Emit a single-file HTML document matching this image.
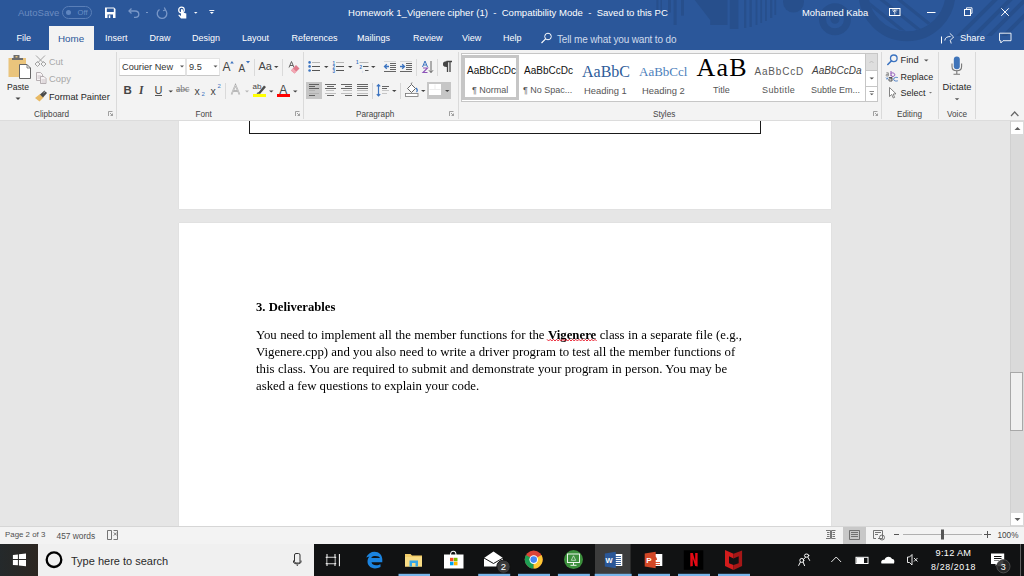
<!DOCTYPE html>
<html><head><meta charset="utf-8">
<style>
*{margin:0;padding:0;box-sizing:border-box}
html,body{width:1024px;height:576px;overflow:hidden;background:#e6e6e6;font-family:"Liberation Sans",sans-serif}
.a{position:absolute;white-space:pre;line-height:1}
#title{position:absolute;left:0;top:0;width:1024px;height:50px;background:#2b579a;overflow:hidden}
#ribbon{position:absolute;left:0;top:50px;width:1024px;height:71px;background:#f3f3f3;border-bottom:1px solid #dcdcdc}
#doc{position:absolute;left:0;top:121px;width:1024px;height:405px;background:#e6e6e6;overflow:hidden}
#status{position:absolute;left:0;top:526px;width:1024px;height:18px;background:#f3f3f3;border-top:1px solid #d6d6d6}
#taskbar{position:absolute;left:0;top:544px;width:1024px;height:32px;background:#111213}
.tab{position:absolute;top:33px;font-size:9px;color:#fff}
.gl{position:absolute;top:108px;font-size:9px;color:#444}
.sep{position:absolute;width:1px;background:#dadada}
.t{position:absolute;white-space:pre;line-height:1;color:#262626}
.gl2{font-size:8.2px;color:#444;top:110.6px!important}
</style></head><body>

<div id="title">
  <svg width="1024" height="50" style="position:absolute;left:0;top:0">
    <defs>
      <clipPath id="cpb"><circle cx="715" cy="-57" r="87"/></clipPath>
      <clipPath id="cpi"><circle cx="907" cy="-7.3" r="38.4"/></clipPath>
      <clipPath id="cpr"><rect x="950" y="0" width="74" height="36"/></clipPath>
    </defs>
    <g fill="#274f8c">
      <rect x="656.4" y="0" width="2" height="15"/>
      <rect x="660.5" y="0" width="1.5" height="12"/>
      <rect x="668" y="0" width="3" height="12.5"/>
      <rect x="673.6" y="0" width="3" height="25"/>
      <rect x="681" y="0" width="3" height="15.6"/>
      <rect x="729.8" y="0" width="8.6" height="29"/>
      <rect x="744" y="0" width="2.3" height="28"/>
      <rect x="749.5" y="0" width="2.3" height="27"/>
      <rect x="755.6" y="0" width="1.8" height="25"/>
      <rect x="760.3" y="0" width="1.8" height="23"/>
      <rect x="765" y="0" width="1.8" height="21"/>
      <rect x="770" y="0" width="2.3" height="18"/>
      <rect x="774.4" y="0" width="1.8" height="15"/>
      <path d="M694.7 0 H727.5 V25 H710.3 V20.3 Z"/>
    </g>
    <circle cx="793.5" cy="2" r="10.5" fill="#274f8c"/>
    <circle cx="835" cy="19.3" r="12.5" fill="none" stroke="#274f8c" stroke-width="7"/>
    <circle cx="835" cy="19.3" r="4.5" fill="#274f8c"/>
    <circle cx="907" cy="-7.3" r="43.5" fill="none" stroke="#274f8c" stroke-width="10"/>
    <g stroke="#274f8c" stroke-width="3.2" clip-path="url(#cpi)">
      <path d="M862 -2 L912 38 M872 -8 L922 32 M882 -14 L932 26 M855 14 L895 46"/>
    </g>
    <g stroke="#274f8c" stroke-width="4" clip-path="url(#cpr)">
      <path d="M955 40 L1000 -5 M970 40 L1015 -5 M985 40 L1030 -5 M1000 40 L1045 -5"/>
    </g>
  </svg>
  <div class="a" style="left:18px;top:8px;font-size:9.5px;color:#6b8cc0">AutoSave</div>
  <div class="a" style="left:62px;top:6px;width:30px;height:13px;border:1px solid #5a7fb8;border-radius:7px"></div>
  <div class="a" style="left:65.5px;top:9.5px;width:5.5px;height:5.5px;background:#5f86c0;border-radius:50%"></div>
  <div class="a" style="left:77.5px;top:8.5px;font-size:7.6px;color:#6a8fc6">Off</div>
  <div class="a" style="left:348px;top:8px;font-size:9.55px;color:#fff">Homework 1_Vigenere cipher (1)  -  Compatibility Mode  -  Saved to this PC</div>
  <div class="a" style="left:802px;top:8px;font-size:9.4px;color:#fff">Mohamed Kaba</div>
  <div id="home" style="position:absolute;left:49px;top:26px;width:45px;height:24px;background:#f3f3f3"></div>
  <div class="tab" style="left:16.5px">File</div>
  <div class="tab" style="left:58px;font-size:9.8px;top:32.5px;color:#2b579a">Home</div>
  <div class="tab" style="left:105px">Insert</div>
  <div class="tab" style="left:149.5px">Draw</div>
  <div class="tab" style="left:192px">Design</div>
  <div class="tab" style="left:242px">Layout</div>
  <div class="tab" style="left:291.5px">References</div>
  <div class="tab" style="left:357px">Mailings</div>
  <div class="tab" style="left:413px">Review</div>
  <div class="tab" style="left:462px">View</div>
  <div class="tab" style="left:503px">Help</div>
  <div class="tab" style="left:557px;top:34px;font-size:10px;letter-spacing:-0.15px;color:#d0dbec">Tell me what you want to do</div>
  <div class="tab" style="left:960px;top:33px;font-size:9.3px">Share</div>
  <svg width="1024" height="50" style="position:absolute;left:0;top:0">
    <!-- save -->
    <path d="M105 7.5 H114 L115.5 9 V18 H105 Z" fill="#fff"/>
    <rect x="106.8" y="8.5" width="7" height="3.5" fill="#2b579a"/>
    <rect x="107.5" y="14.5" width="5.5" height="3.5" fill="#2b579a"/>
    <rect x="108.8" y="15.3" width="1.5" height="2.7" fill="#fff"/>
    <!-- undo -->
    <path d="M129 11 H135 C137.5 11 138.8 12.5 138.8 14.2 C138.8 16 137.5 17.3 135.5 17.3 H134" stroke="#7a98c8" stroke-width="1.3" fill="none"/>
    <path d="M131.5 8.5 L129 11 L131.5 13.5" stroke="#7a98c8" stroke-width="1.3" fill="none"/>
    <rect x="146" y="12" width="2" height="1" fill="#7a98c8"/>
    <!-- redo -->
    <path d="M165 9.8 A4.8 4.8 0 1 1 159.5 9.5" stroke="#7a98c8" stroke-width="1.3" fill="none"/>
    <path d="M164.3 7.5 L165.5 10 L163 10.8" stroke="#7a98c8" stroke-width="1.2" fill="none"/>
    <!-- touch -->
    <circle cx="181.5" cy="10" r="2.8" fill="none" stroke="#fff" stroke-width="1.2"/>
    <path d="M181 9 V16 L179 14.5 L178.3 15.3 L181 18.5 H186.3 V13.5 L183 12.5 V9.5 Z" fill="#fff"/>
    <path d="M194 12 H197.5 L195.75 13.8 Z" fill="#fff"/>
    <path d="M209.3 10.5 H214.3" stroke="#fff" stroke-width="0.9"/><path d="M209.8 12 H213.8 L211.8 14 Z" fill="#fff"/>
    <!-- search icon -->
    <circle cx="548" cy="36.5" r="3.3" fill="none" stroke="#fff" stroke-width="1"/>
    <path d="M545.6 38.9 L541.5 43" stroke="#fff" stroke-width="1.1"/>
    <!-- window controls -->
    <rect x="889.5" y="8.5" width="10.5" height="7" fill="none" stroke="#fff" stroke-width="1"/>
    <path d="M894.75 14.5 V10.5 M893 12 L894.75 10.3 L896.5 12 M892 10 H897.5" stroke="#fff" stroke-width="0.8" fill="none"/>
    <rect x="927" y="12" width="8.5" height="1" fill="#fff"/>
    <rect x="964.5" y="9.5" width="6" height="6" fill="none" stroke="#fff" stroke-width="1"/>
    <path d="M966.5 9.5 V7.8 H972 V13.3 H970.5" fill="none" stroke="#fff" stroke-width="0.9"/>
    <path d="M1001.3 8.3 L1008.8 15.8 M1008.8 8.3 L1001.3 15.8" stroke="#fff" stroke-width="1"/>
    <!-- share -->
    <rect x="941" y="36.5" width="1" height="7" fill="#fff"/>
    <path d="M944.8 40.5 C945 37.8 947 36.5 950.5 36.5 M949.8 33.3 L953.6 37 L950.3 40.3 M950.3 40.3 L951.2 43.5" stroke="#fff" stroke-width="0.9" fill="none"/>
    <path d="M999.5 33.2 H1011 V40.7 H1003 L1000.8 43 V40.7 H999.5 Z" fill="none" stroke="#fff" stroke-width="0.9"/>
  </svg>
</div>

<div id="ribbon"></div>
<div id="rb" style="position:absolute;left:0;top:0;width:1024px;height:121px">
  <!-- separators -->
  <div class="sep" style="left:116px;top:52px;height:67px"></div>
  <div class="sep" style="left:303px;top:52px;height:67px"></div>
  <div class="sep" style="left:458px;top:52px;height:67px"></div>
  <div class="sep" style="left:881px;top:52px;height:67px"></div>
  <div class="sep" style="left:938px;top:52px;height:67px"></div>
  <div class="sep" style="left:975px;top:52px;height:67px"></div>
  <!-- group labels -->
  <div class="t gl2" style="left:34px;top:109px">Clipboard</div>
  <div class="t gl2" style="left:195.5px;top:109px">Font</div>
  <div class="t gl2" style="left:356px;top:109px">Paragraph</div>
  <div class="t gl2" style="left:653px;top:109px">Styles</div>
  <div class="t gl2" style="left:897px;top:109px">Editing</div>
  <div class="t gl2" style="left:947px;top:109px">Voice</div>
  <!-- clipboard -->
  <div class="t" style="left:7px;top:83px;font-size:8.6px">Paste</div>
  <div class="t" style="left:49px;top:58px;font-size:9px;color:#a8a8a8">Cut</div>
  <div class="t" style="left:49px;top:74px;font-size:9.4px;color:#a8a8a8">Copy</div>
  <div class="t" style="left:49px;top:93px;font-size:9.2px">Format Painter</div>
  <!-- font -->
  <div style="position:absolute;left:119px;top:58px;width:67px;height:18px;background:#fff;border:1px solid #e3e3e3;border-bottom-color:#c8c8c8"></div>
  <div style="position:absolute;left:186px;top:58px;width:34px;height:18px;background:#fff;border:1px solid #e3e3e3;border-bottom-color:#c8c8c8"></div>
  <div class="t" style="left:122px;top:63px;font-size:9.2px;color:#333">Courier New</div>
  <div class="t" style="left:189px;top:63px;font-size:9.2px;color:#333">9.5</div>
  <!-- editing -->
  <div class="t" style="left:900.5px;top:56px;font-size:9.3px">Find</div>
  <div class="t" style="left:900.5px;top:72.5px;font-size:8.9px">Replace</div>
  <div class="t" style="left:900.5px;top:88.5px;font-size:9px">Select</div>
  <div class="t" style="left:942.5px;top:82.5px;font-size:9.3px">Dictate</div>
  <!-- font row2 text icons -->
  <div class="t" style="left:123.5px;top:85px;font-size:11.5px;font-weight:bold;color:#444">B</div>
  <div class="t" style="left:139px;top:85px;font-size:11.5px;font-weight:bold;font-style:italic;font-family:'Liberation Serif',serif;color:#444">I</div>
  <div class="t" style="left:154.5px;top:85px;font-size:11px;color:#444">U</div>
  <div class="t" style="left:176px;top:85px;font-size:9.5px;color:#777;font-family:'Liberation Serif',serif">abc</div>
  <div class="t" style="left:194.5px;top:86px;font-size:10.5px;color:#444">x</div>
  <div class="t" style="left:201.5px;top:91px;font-size:6px;color:#3b73c0">2</div>
  <div class="t" style="left:210.5px;top:86px;font-size:10.5px;color:#444">x</div>
  <div class="t" style="left:217.5px;top:83px;font-size:6px;color:#3b73c0">2</div>
  <div class="t" style="left:222.5px;top:61px;font-size:12px;color:#444">A</div>
  <div class="t" style="left:238.5px;top:63.5px;font-size:10px;color:#444">A</div>
  <div class="t" style="left:258.5px;top:61px;font-size:11px;color:#444">Aa</div>
  <div class="t" style="left:279.3px;top:84px;font-size:12px;color:#444">A</div>
  <div class="t" style="left:252.5px;top:83px;font-size:8px;color:#444">ab</div>
  <!-- styles gallery -->
  <div style="position:absolute;left:461px;top:53px;width:417px;height:49px;background:#fff;border:1px solid #c6c6c6"></div>
  <div style="position:absolute;left:462px;top:55px;width:57px;height:45px;border:3px solid #c6c6c6"></div>
  <div style="position:absolute;left:865px;top:53px;width:13px;height:49px;border:1px solid #c6c6c6;background:#fff"></div>
  <div style="position:absolute;left:866px;top:54px;width:11px;height:16px;background:#dedede"></div>
  <div style="position:absolute;left:865px;top:70px;width:13px;height:1px;background:#c6c6c6"></div>
  <div style="position:absolute;left:865px;top:86px;width:13px;height:1px;background:#c6c6c6"></div>
  <div class="t" style="left:467px;top:66px;font-size:10px;color:#111">AaBbCcDc</div>
  <div class="t" style="left:472px;top:86px;font-size:9px;color:#555">¶ Normal</div>
  <div class="t" style="left:524px;top:66px;font-size:10px;color:#111">AaBbCcDc</div>
  <div class="t" style="left:523px;top:86px;font-size:9px;color:#555">¶ No Spac...</div>
  <div class="t" style="left:582px;top:63.5px;font-size:16px;color:#2e5c9a;font-family:'Liberation Serif',serif">AaBbC</div>
  <div class="t" style="left:584px;top:86px;font-size:9.4px;color:#555">Heading 1</div>
  <div class="t" style="left:639px;top:65px;font-size:13px;color:#4a7ebb;font-family:'Liberation Serif',serif">AaBbCcl</div>
  <div class="t" style="left:642px;top:86px;font-size:9.4px;color:#555">Heading 2</div>
  <div class="t" style="left:696.5px;top:55px;font-size:26px;letter-spacing:1.2px;color:#000;font-family:'Liberation Serif',serif">AaB</div>
  <div class="t" style="left:713px;top:86px;font-size:9px;color:#555">Title</div>
  <div class="t" style="left:754.5px;top:67px;font-size:10px;color:#5a5a5a;letter-spacing:0.8px">AaBbCcD</div>
  <div class="t" style="left:762px;top:86px;font-size:9px;color:#555;letter-spacing:0.4px">Subtitle</div>
  <div class="t" style="left:812px;top:66px;font-size:10px;color:#404040;font-style:italic">AaBbCcDa</div>
  <div class="t" style="left:811px;top:86px;font-size:9px;color:#555">Subtle Em...</div>
</div>

<div id="doc">
  <div style="position:absolute;left:179px;top:0;width:652px;height:88px;background:#fff;box-shadow:0 0 1px 0 rgba(0,0,0,0.12)"></div>
  <div style="position:absolute;left:249px;top:-1px;width:512px;height:14px;border:1px solid #1a1a1a;border-top:none"></div>
  <div style="position:absolute;left:179px;top:101.5px;width:652px;height:310px;background:#fff;box-shadow:0 0 1px 0 rgba(0,0,0,0.12)"></div>
  <div class="a" style="left:255.5px;top:180px;font-family:'Liberation Serif',serif;font-size:12.65px;font-weight:bold;color:#000;will-change:transform">3. Deliverables</div>
  <div style="position:absolute;left:256px;top:206px;font-family:'Liberation Serif',serif;font-size:12.8px;line-height:16.85px;color:#000;white-space:pre;will-change:transform"><div style="word-spacing:0.18px">You need to implement all the member functions for the <b>Vigenere</b> class in a separate file (e.g.,</div><div style="word-spacing:0.08px">Vigenere.cpp) and you also need to write a driver program to test all the member functions of</div><div style="word-spacing:0.25px">this class. You are required to submit and demonstrate your program in person. You may be</div><div>asked a few questions to explain your code.</div></div>
  <div style="position:absolute;left:1010px;top:0;width:14px;height:405px;background:#dadada;border-left:1px solid #d0d0d0"></div>
  <div style="position:absolute;left:1011px;top:1px;width:12px;height:12px;background:#fff"></div>
  <div style="position:absolute;left:1011px;top:392px;width:12px;height:12px;background:#fff"></div>
  <div style="position:absolute;left:1010px;top:251px;width:13px;height:59px;background:#f0f0f0;border:1px solid #a8a8a8"></div>
  <svg width="14" height="405" style="position:absolute;left:1010px;top:0"><path d="M4.5 9 L7.5 6 L10.5 9 Z" fill="#606060"/><path d="M4.5 397 L7.5 400 L10.5 397 Z" fill="#606060"/></svg>
</div>

<svg id="icons" width="1024" height="121" viewBox="0 0 1024 121" style="position:absolute;left:0;top:0">
  <!-- Paste -->
  <rect x="8.5" y="58" width="17.5" height="19" fill="#eac47c"/>
  <rect x="12" y="58" width="11" height="2" fill="#6d6d6d"/>
  <rect x="13.5" y="55" width="6" height="3.5" fill="#6d6d6d"/>
  <rect x="15.5" y="56" width="2" height="1.5" fill="#eac47c"/>
  <path d="M19.5 64.5 H27 L30.5 68 V78.5 H19.5 Z" fill="#fff" stroke="#666" stroke-width="1"/>
  <path d="M27 64.5 V68 H30.5" fill="none" stroke="#666" stroke-width="0.8"/>
  <path d="M15.5 97.5 L20.5 97.5 L18 100 Z" fill="#444"/>
  <!-- Cut -->
  <g stroke="#a3a3a3" stroke-width="1" fill="none">
    <path d="M36 55.5 L43.5 63 M45 55.5 L37.5 63"/>
    <path d="M37.5 61.5 L40 64 L37.5 66.5 L35 64 Z"/>
    <path d="M43.5 61.5 L46 64 L43.5 66.5 L41 64 Z"/>
  </g>
  <!-- Copy -->
  <g stroke="#b0a8ac" stroke-width="0.9" fill="#f7f3f5">
    <path d="M36.5 72.5 H40.5 L42.5 74.5 V80.5 H36.5 Z"/>
    <path d="M40.5 76.5 H44 L46 78.5 V83.5 H40.5 Z"/>
  </g>
  <g stroke="#b8b0b4" stroke-width="0.7"><path d="M37.5 76 H41 M37.5 78 H40 M41.5 80 H45 M41.5 82 H45"/></g>
  <!-- Format painter -->
  <path d="M35 98 L40 94 L43.5 97.5 L39.5 101.5 Z" fill="#e8b964"/>
  <path d="M40 94.5 L44.5 90.5 L47 93 L43 97.5 Z" fill="#4a4a4a"/>
  <path d="M43.5 93 L46.5 90.5" stroke="#f3f3f3" stroke-width="0.6"/>
  <!-- font group icons -->
  <path d="M180 65.5 H184 L182 67.5 Z" fill="#555"/>
  <path d="M213.5 65.5 H217.5 L215.5 67.5 Z" fill="#555"/>
  <rect x="155" y="95" width="7" height="0.9" fill="#444"/>
  <path d="M168.5 90.5 H173 L170.75 92.5 Z" fill="#444"/>
  <rect x="176" y="89.5" width="13.5" height="0.8" fill="#777"/>
  <path d="M230.2 63.5 L232 61 L233.8 63.5 Z" fill="#3b73c0"/>
  <path d="M246 61 L250 61 L248 63.5 Z" fill="#3b73c0"/>
  <path d="M274 66 H278.5 L276.25 68 Z" fill="#444"/>
  <rect x="225" y="83" width="1" height="16" fill="#dadada"/>
  <rect x="254" y="59" width="1" height="17" fill="#dadada"/>
  <rect x="282" y="59" width="1" height="17" fill="#dadada"/>
  <!-- clear formatting -->
  <path d="M289 67.5 L291.5 61.5 L294 67.5 M290 65.5 H293" stroke="#555" stroke-width="0.9" fill="none"/>
  <path d="M291 70.5 L296 65 L299.5 68.5 L294.5 73.5 Z" fill="#e07b8c"/>
  <path d="M291 70.5 L293 68.3 L296.5 71.7 L294.5 73.5 Z" fill="#f2a8b4"/>
  <!-- text effects -->
  <path d="M231.5 94.5 L235.5 85 L239.5 94.5 M233 91 H238" stroke="#a6a6a6" stroke-width="1.6" fill="none"/>
  <path d="M231.5 94.5 L235.5 85 L239.5 94.5" stroke="#f3f3f3" stroke-width="0.5" fill="none"/>
  <path d="M245 90.5 H249 L247 92.5 Z" fill="#b5b5b5"/>
  <!-- highlighter -->
  <path d="M258 93 L264 85.5 L266 87 L260 94 Z" fill="#4d4d4d"/>
  <path d="M256.5 94 L258 92 L259.5 93.5 Z" fill="#4d4d4d"/>
  <rect x="253" y="94" width="13" height="3" fill="#ffff00"/>
  <path d="M269 90.5 H273.5 L271.25 92.5 Z" fill="#444"/>
  <rect x="277" y="94" width="13" height="3" fill="#ff0000"/>
  <path d="M293 90.5 H297.5 L295.25 92.5 Z" fill="#444"/>
  <!-- paragraph group -->
  <g fill="#3b73c0">
    <circle cx="309.6" cy="62.4" r="1.3"/><circle cx="309.6" cy="66.4" r="1.3"/><circle cx="309.6" cy="70.5" r="1.3"/>
  </g>
  <g stroke="#555" stroke-width="1">
    <path d="M312 66.5 H320 M312 70.5 H320"/>
    <path d="M336 66.5 H344 M336 70.5 H344"/>
    <path d="M363 66.5 H368.5 M365 70.5 H368.5"/>
  </g>
  <g stroke="#b5b5b5" stroke-width="1"><path d="M312 62.5 H320 M336 62.5 H344 M359.5 62.5 H368.5"/></g>
  <g fill="#3b73c0" font-family="Liberation Sans" font-size="4.5" font-weight="bold">
    <text x="332.5" y="64.5">1</text><text x="332.5" y="68.5">2</text><text x="332.5" y="72.5">3</text>
    <text x="356" y="64">1</text><text x="359.5" y="68.5">2</text>
  </g>
  <text x="362" y="72.5" font-family="Liberation Sans" font-size="4" fill="#a0b8e0">i</text>
  <path d="M324 66 H328.5 L326.25 68 Z" fill="#444"/>
  <path d="M348 66 H352.5 L350.25 68 Z" fill="#444"/>
  <path d="M371 66 H375.5 L373.25 68 Z" fill="#444"/>
  <!-- alignment -->
  <rect x="306" y="82" width="16" height="17" fill="#c6c6c6"/>
  <g stroke="#555" stroke-width="0.9">
    <path d="M309 84.5 H319 M309 86.5 H315 M309 88.5 H319 M309 95.5 H315"/>
    <path d="M325 84.5 H336 M327 86.5 H334 M325 88.5 H336 M327 95.5 H334"/>
    <path d="M341 84.5 H352 M345 86.5 H352 M341 88.5 H352 M345 95.5 H352"/>
    <path d="M357 84.5 H368 M357 86.5 H368 M357 88.5 H368 M357 95.5 H368"/>
  </g>
  <g stroke="#a8a8a8" stroke-width="0.7">
    <path d="M309 90.5 H315 M309 93.5 H319"/>
    <path d="M326 90.5 H334 M325 93.5 H336"/>
    <path d="M343 90.5 H352 M341 93.5 H352"/>
    <path d="M357 90.5 H368 M357 93.5 H368"/>
  </g>
  <rect x="372" y="83" width="1" height="16" fill="#d6d6d6"/>
  <!-- indent -->
  <g stroke="#555" stroke-width="0.9">
    <path d="M390 63.5 H396 M390 65.5 H396 M390 67.5 H396 M390 69.5 H396 M384 71.5 H396"/>
    <path d="M406 63.5 H412 M406 65.5 H412 M406 67.5 H412 M406 69.5 H412 M400 71.5 H412"/>
  </g>
  <g stroke="#c8c8c8" stroke-width="0.7"><path d="M384 61.5 H396 M400 61.5 H412"/></g>
  <g stroke="#3b73c0" stroke-width="1.3" fill="none">
    <path d="M389 66.5 H384.5 M386.8 64.2 L384.5 66.5 L386.8 68.8"/>
    <path d="M400 66.5 H404.5 M402.2 64.2 L404.5 66.5 L402.2 68.8"/>
  </g>
  <rect x="416" y="59" width="1" height="17" fill="#dadada"/>
  <!-- sort -->
  <path d="M422.5 67 L425 61 L427.5 67 M423.5 65 H426.5" stroke="#3b73c0" stroke-width="1" fill="none"/>
  <path d="M423 68 H427.5 L423 72.5 H427.5" stroke="#8e55b8" stroke-width="1.1" fill="none"/>
  <path d="M431 61 V72.5 M429 70.3 L431 72.5 L433 70.3" stroke="#555" stroke-width="0.9" fill="none"/>
  <rect x="437" y="59" width="1" height="17" fill="#dadada"/>
  <!-- pilcrow -->
  <path d="M446.5 61.5 H452 M447.5 61.5 V72 M450 61.5 V72" stroke="#444" stroke-width="1.3" fill="none"/>
  <path d="M447.5 61.2 C443.5 61.2 443 62.5 443 64.2 C443 66 444 67 447.5 67 Z" fill="#444"/>
  <!-- line spacing -->
  <g stroke="#3b73c0" stroke-width="1.2" fill="none">
    <path d="M378.5 84.5 V96 M376.8 86.3 L378.5 84.5 L380.2 86.3 M376.8 94.2 L378.5 96 L380.2 94.2"/>
  </g>
  <g stroke="#555" stroke-width="0.9"><path d="M382 86.5 H389 M382 88.5 H387"/></g>
  <g stroke="#b0b0b0" stroke-width="0.7"><path d="M382 90.5 H389 M382 93.5 H387"/></g>
  <path d="M392 90 H396.5 L394.25 92 Z" fill="#444"/>
  <rect x="400" y="83" width="1" height="16" fill="#d6d6d6"/>
  <!-- shading -->
  <path d="M407.5 88.5 L411.5 84.5 L415.5 88.5 L411.5 92.5 Z" fill="#fff" stroke="#555" stroke-width="0.9"/>
  <path d="M411 84 L412 82.5" stroke="#555" stroke-width="0.8"/>
  <path d="M416 88 C417.5 89.5 417.5 91 416.5 92" stroke="#3b73c0" stroke-width="1.2" fill="none"/>
  <rect x="405.5" y="93.5" width="12.5" height="3" fill="#fff" stroke="#777" stroke-width="0.8"/>
  <path d="M421 90 H425.5 L423.25 92 Z" fill="#444"/>
  <!-- borders -->
  <rect x="427" y="82" width="24" height="17" fill="#c6c6c6"/>
  <rect x="429" y="84" width="12" height="11" fill="#fff"/>
  <path d="M435 84.5 V89 M429.5 89.5 H440.5" stroke="#e8e8e8" stroke-width="0.8"/>
  <path d="M445 90 H449.5 L447.25 92 Z" fill="#444"/>
  <!-- gallery arrows -->
  <path d="M869.5 63 L871.5 61 L873.5 63" stroke="#b8b8b8" stroke-width="0.8" fill="none"/>
  <path d="M869.5 77.5 H874 L871.75 79.5 Z" fill="#555"/>
  <path d="M869.5 91.5 H874" stroke="#555" stroke-width="0.7"/>
  <path d="M869.8 93.5 H873.7 L871.75 95.3 Z" fill="#555"/>
  <!-- editing -->
  <circle cx="893.8" cy="58.3" r="3.3" fill="none" stroke="#3b73c0" stroke-width="1.3"/>
  <path d="M891.5 60.8 L887.8 64.5" stroke="#3b73c0" stroke-width="1.6" stroke-linecap="round"/>
  <path d="M924 59.5 H928.5 L926.25 61.5 Z" fill="#555"/>
  <path d="M886.3 72.8 H888.3 V76 H886.8 C885.8 76 885.8 74.3 886.8 74.3 H888.3" stroke="#666" stroke-width="0.7" fill="none"/>
  <path d="M891 71 V76 M891 73.5 C891 72.5 894.8 72.5 894.8 74.7 C894.8 77 891 77 891 75" stroke="#8e55b8" stroke-width="1" fill="none"/>
  <path d="M888.8 77.5 H892 V81 H889.8 C888.3 81 888.3 78.8 889.8 78.8 H892" stroke="#444" stroke-width="0.9" fill="none"/>
  <path d="M897.8 77.6 C897 77.2 893.6 77 893.6 79.2 C893.6 81.4 897 81.2 897.8 80.8" stroke="#3b73c0" stroke-width="0.9" fill="none"/>
  <path d="M886 77.5 L887.5 79 M886.2 79 H887.7 V77.6" stroke="#3b73c0" stroke-width="0.7" fill="none"/>
  <path d="M889.5 87.5 V96.5 L891.7 94.5 L893.3 98 L894.6 97.4 L893.2 94 L896 93.8 Z" fill="#fff" stroke="#666" stroke-width="0.8"/>
  <path d="M929 92 H932 L930.5 93.5 Z" fill="#777"/>
  <!-- voice -->
  <rect x="953.8" y="56.5" width="6" height="12.8" rx="3" fill="#3f74b9"/>
  <path d="M952 63.5 V66.5 C952 69.2 954.2 70.8 956.8 70.8 C959.4 70.8 961.6 69.2 961.6 66.5 V63.5" stroke="#777" stroke-width="1.1" fill="none"/>
  <path d="M956.8 70.8 V74 M953.5 74.3 H960" stroke="#777" stroke-width="1.1"/>
  <path d="M954.8 98.3 H959.3 L957.05 100.3 Z" fill="#555"/>
  <path d="M1011 116 L1014.7 112 L1018.4 116" stroke="#666" stroke-width="1.2" fill="none"/>
  <!-- dialog launchers -->
  <g stroke="#8a8a8a" stroke-width="0.8" fill="none">
    <path d="M108.5 116 V111.5 H112.5"/><path d="M110 113 L112.5 115.5 M112.5 113.5 V115.5 H110.5"/>
    <path d="M295.5 116 V111.5 H299.5"/><path d="M297 113 L299.5 115.5 M299.5 113.5 V115.5 H297.5"/>
    <path d="M449.5 116 V111.5 H453.5"/><path d="M451 113 L453.5 115.5 M453.5 113.5 V115.5 H451.5"/>
    <path d="M873.5 116 V111.5 H877.5"/><path d="M875 113 L877.5 115.5 M877.5 113.5 V115.5 H875.5"/>
  </g>
</svg>

<svg width="1024" height="576" style="position:absolute;left:0;top:0"><polyline points="547.0 339.3 548.6 341.0 550.2 339.3 551.8 341.0 553.4 339.3 555.0 341.0 556.6 339.3 558.2 341.0 559.8 339.3 561.4 341.0 563.0 339.3 564.6 341.0 566.2 339.3 567.8 341.0 569.4 339.3 571.0 341.0 572.6 339.3 574.2 341.0 575.8 339.3 577.4 341.0 579.0 339.3 580.6 341.0 582.2 339.3 583.8 341.0 585.4 339.3 587.0 341.0 588.6 339.3 590.2 341.0 591.8 339.3 593.4 341.0 595.0 339.3 596.6 341.0" fill="none" stroke="#e81123" stroke-width="0.9"/></svg>
<div id="status">
  <div class="a" style="left:5px;top:531px;font-size:7.9px;color:#505050;position:absolute;top:4px">Page 2 of 3</div>
  <div class="a" style="left:56.5px;top:5px;font-size:8.4px;color:#505050">457 words</div>
  <div class="a" style="left:997.5px;top:5px;font-size:8.2px;color:#444">100%</div>
  <div style="position:absolute;left:843px;top:0;width:23px;height:17px;background:#c8c8c8"></div>
</div>
<svg width="1024" height="50" style="position:absolute;left:0;top:526px">
  <g stroke="#666" stroke-width="0.9" fill="none">
    <path d="M107.5 4.5 H111.5 V13.5 H107.5 Z M113.5 4.5 H117.5 V13.5 H113.5"/>
    <path d="M113.8 6.5 L116.8 9.5 M116.8 6.5 L113.8 9.5"/>
    <!-- read mode -->
    <path d="M826 4.5 H830.5 V12.5 H826 M835.5 4.5 H831.5 V12.5 H835.5 M827 6.5 H829.5 M827 8.5 H829.5 M827 10.5 H829.5 M832.5 6.5 H835 M832.5 8.5 H835 M832.5 10.5 H835"/>
    <!-- print layout -->
    <path d="M849.5 4.5 H859.5 V13.5 H849.5 Z M851 6.5 H858 M851 8.5 H858 M851 10.5 H858"/>
    <!-- web layout -->
    <path d="M873.5 4.5 H882.5 V12.5 H878 M873.5 4.5 V12.5 H876 M875 6.5 H881 M875 8.5 H878"/>
    <circle cx="882" cy="11.5" r="2.5"/>
  </g>
  <rect x="894" y="8" width="5" height="1" fill="#555"/>
  <rect x="903" y="8" width="79" height="1" fill="#b0b0b0"/>
  <rect x="941" y="3.5" width="3" height="10" fill="#555"/>
  <path d="M984 8.5 H991 M987.5 5 V12" stroke="#555" stroke-width="1"/>
</svg>

<div id="taskbar">
  <div style="position:absolute;left:0;top:0;width:38px;height:32px;background:linear-gradient(90deg,#24292b,#2c2621)"></div>
  <div style="position:absolute;left:38px;top:0;width:276px;height:32px;background:#f0f0f0"></div>
  <div class="a" style="left:71px;top:11.5px;font-size:11px;color:#2a2a2a">Type here to search</div>
  <div style="position:absolute;left:595px;top:0;width:36px;height:32px;background:#3c3c3c;border-right:1px solid #2a2a2a"></div>
  <div class="a" style="left:935.5px;top:4.5px;font-size:9.2px;color:#fff;letter-spacing:0.3px">9:12 AM</div>
  <div class="a" style="left:931px;top:19px;font-size:8.8px;color:#fff;letter-spacing:0.65px">8/28/2018</div>
  <svg width="1024" height="32" style="position:absolute;left:0;top:0">
    <!-- windows logo -->
    <path d="M12.9 10.9 L17.9 10.5 V15 H12.9 Z M18.9 10.3 L26 9.6 V15 H18.9 Z M12.9 15.9 H17.9 V21.2 L12.9 20.9 Z M18.9 15.9 H26 V22.2 L18.9 21.5 Z" fill="#fff"/>
    <!-- cortana -->
    <circle cx="54" cy="15.7" r="7.3" fill="none" stroke="#000" stroke-width="2.3"/>
    <!-- mic -->
    <rect x="294.5" y="9.5" width="5.5" height="9.5" rx="1.5" fill="none" stroke="#333" stroke-width="1"/>
    <path d="M293.5 16.5 V18 C293.5 20.5 301 20.5 301 18 V16.5 M297.25 20.5 V22" stroke="#333" stroke-width="1" fill="none"/>
    <!-- task view -->
    <g fill="#fff">
      <rect x="326.5" y="10" width="1" height="12"/><rect x="334.5" y="10" width="1" height="12"/>
      <rect x="325.7" y="12.8" width="10.5" height="1"/><rect x="325.7" y="19.2" width="10.5" height="1"/>
      <rect x="338.9" y="10" width="1" height="12.2"/>
    </g>
    <rect x="327.5" y="13.8" width="7" height="5.4" fill="#111213"/>
    <!-- edge -->
    <path d="M366.2 13.6 C368 9.5 371 7.7 374.5 7.7 C379 7.7 382.3 11 382.3 15.5 V18.3 H371.5 C372 20.5 373.8 21.3 376 21.3 C378 21.3 379.5 20.8 380.5 20.3 V23 C379 23.9 377 24.4 375 24.4 C370.5 24.4 367.5 21.3 367.5 17.5 C367.5 15.8 368.2 13.8 369.5 12.5 C368.5 12.8 367.2 13.2 366.2 13.6 Z" fill="#1b84e0"/>
    <path d="M371.3 14 C371.8 12.6 373 12 375.5 12 C378 12 379.5 12.8 380 14 Z" fill="#111213"/>
    <!-- explorer -->
    <path d="M405 10 H410.5 L412 11.5 H422 V22.5 H405 Z" fill="#f3cd6a"/>
    <rect x="405" y="13" width="17" height="9.5" fill="#f8dc85"/>
    <path d="M409.5 22.5 V16.5 H418 V22.5 M412 22.5 V19 H415.5 V22.5" fill="#35a6e8"/>
    <rect x="412" y="19" width="3.5" height="3.5" fill="#f8dc85"/>
    <rect x="398.5" y="29.8" width="31.5" height="2.2" fill="#78b6ea"/>
    <!-- store -->
    <path d="M450.5 11 C450.5 6 456 6 456 11" stroke="#fff" stroke-width="1.1" fill="none"/>
    <rect x="444" y="10.5" width="19.5" height="14" fill="#fff"/>
    <rect x="450" y="13.8" width="3.5" height="3.5" fill="#f25022"/>
    <rect x="454" y="13.8" width="3.5" height="3.5" fill="#7fba00"/>
    <rect x="450" y="17.8" width="3.5" height="3.5" fill="#00a4ef"/>
    <rect x="454" y="17.8" width="3.5" height="3.5" fill="#ffb900"/>
    <!-- mail -->
    <path d="M484 14 L493.5 7.5 L503 14 V22.5 H484 Z" fill="#fff"/>
    <path d="M484 14 L493.5 19.5 L503 14" stroke="#111" stroke-width="1" fill="none"/>
    <circle cx="503.5" cy="22.7" r="6.7" fill="#3a3a3a" stroke="#101010" stroke-width="1"/>
    <text x="500.8" y="26.3" font-family="Liberation Sans" font-size="9.5" fill="#fff">2</text>
    <rect x="478.2" y="29.8" width="32" height="2.2" fill="#78b6ea"/>
    <!-- chrome -->
    <circle cx="533.7" cy="15.6" r="9" fill="#db4437"/>
    <path d="M533.7 15.6 L533.70 24.60 A9 9 0 0 1 525.91 11.10 Z" fill="#1e9e54"/>
    <path d="M533.7 15.6 L541.49 11.10 A9 9 0 0 1 533.70 24.60 Z" fill="#fcc934"/>
    <circle cx="533.7" cy="15.6" r="4.3" fill="#fff"/>
    <circle cx="533.7" cy="15.6" r="3.3" fill="#4285f4"/>
    <rect x="518" y="29.8" width="32" height="2.2" fill="#78b6ea"/>
    <!-- green app -->
    <circle cx="573.5" cy="15.6" r="9.5" fill="#3c8f3c"/>
    <rect x="567.5" y="10" width="12" height="8.5" fill="none" stroke="#fff" stroke-width="0.9"/>
    <path d="M573.5 18.5 V21 M570.5 21.3 H576.5" stroke="#fff" stroke-width="0.9"/>
    <path d="M573.5 11.8 L571.3 16.3 H575.7 Z" fill="none" stroke="#fff" stroke-width="0.6"/>
    <rect x="557.9" y="29.8" width="32" height="2.2" fill="#78b6ea"/>
    <!-- word -->
    <rect x="610" y="10" width="12.3" height="12" fill="#fff"/>
    <path d="M612 12.5 H621 M612 14.5 H621 M612 16.5 H621 M612 18.5 H621 M612 20.5 H621" stroke="#2b5797" stroke-width="0.9"/>
    <path d="M604.8 9.5 L615.8 7.8 V24.2 L604.8 22.5 Z" fill="#2b5797"/>
    <text x="605.6" y="19.3" font-family="Liberation Sans" font-size="7.5" font-weight="bold" fill="#fff">W</text>
    <rect x="594.7" y="29.8" width="37" height="2.2" fill="#78b6ea"/>
    <!-- ppt -->
    <rect x="650" y="10" width="12.3" height="12" fill="#fff"/>
    <path d="M653 12 V16 H657 A4 4 0 0 0 653 12 Z" fill="#d24726"/>
    <path d="M653 18.5 H660 M653 20.5 H660" stroke="#d24726" stroke-width="0.9"/>
    <path d="M644.7 9.5 L655.7 7.8 V24.2 L644.7 22.5 Z" fill="#d24726"/>
    <text x="646.3" y="19.3" font-family="Liberation Sans" font-size="8" font-weight="bold" fill="#fff">P</text>
    <rect x="638" y="29.8" width="32" height="2.2" fill="#78b6ea"/>
    <!-- netflix -->
    <rect x="683.8" y="6.3" width="19.5" height="19.5" fill="#000"/>
    <path d="M690.3 9 H692.8 L695.2 17 V9 H697.6 V22.5 L695.2 22 L692.8 14.5 V22 L690.3 22.5 Z" fill="#e50914"/>
    <rect x="678" y="29.8" width="32" height="2.2" fill="#78b6ea"/>
    <!-- mcafee -->
    <path d="M725 6.1 L733.5 9.7 V14.4 L729 12.2 V19.2 L733.5 21 V25.9 L725 21.9 Z" fill="#d21c1c"/>
    <path d="M742.1 6.5 L733.5 9.7 V14.4 L738.7 12.2 V19.2 L733.5 21 V25.9 L742.1 21.9 Z" fill="#a51717"/>
    <rect x="718" y="29.8" width="32" height="2.2" fill="#78b6ea"/>
    <!-- people -->
    <g stroke="#fff" stroke-width="1" fill="none" stroke-linecap="round">
      <ellipse cx="806.6" cy="11.6" rx="2.2" ry="1.6"/>
      <path d="M805.3 13.4 L803.3 15.6 M808 13.4 L809.6 16.4"/>
      <circle cx="801.8" cy="16.4" r="2"/>
      <path d="M800.3 18.3 L798.7 21.4 M803.2 18.3 L804.5 21.6"/>
    </g>
    <!-- chevron -->
    <path d="M831.3 18 L836.2 13 L841.1 18" stroke="#fff" stroke-width="0.9" fill="none"/>
    <!-- battery -->
    <rect x="856" y="13.3" width="12" height="6.2" fill="none" stroke="#fff" stroke-width="1"/>
    <rect x="856.5" y="13.8" width="7.5" height="5.2" fill="#fff"/>
    <!-- onedrive -->
    <path d="M881.5 19.5 C880.5 17 882.5 15.3 884.5 15.8 C885.5 12 890.5 11.5 892 15 C894 14.8 895 17 894 19.5 Z" fill="#fff"/>
    <!-- volume -->
    <path d="M907.5 13 H909.5 L912 10.5 V21 L909.5 18.5 H907.5 Z" fill="none" stroke="#fff" stroke-width="0.9"/>
    <path d="M914 14 L917.5 17.5 M917.5 14 L914 17.5" stroke="#fff" stroke-width="0.9"/>
    <!-- notifications -->
    <path d="M991 9.6 H1004.2 V20 H997.5 L995.6 21.8 V20 H991 Z" fill="#fff"/>
    <rect x="994" y="12" width="7.5" height="1" fill="#111"/>
    <rect x="994" y="14" width="7.5" height="1" fill="#111"/>
    <rect x="994" y="16" width="5" height="1" fill="#888"/>
    <circle cx="1003.4" cy="22.3" r="6.6" fill="#262626" stroke="#4a4a4a" stroke-width="1"/>
    <path d="M1003.4 22.3 V16.2 A6.1 6.1 0 0 0 997.3 22.3 Z" fill="#444"/>
    <text x="1000.8" y="25.8" font-family="Liberation Sans" font-size="9" fill="#fff">3</text>
    <rect x="1020" y="0" width="1" height="32" fill="#606060"/>
  </svg>
</div>

</body></html>
